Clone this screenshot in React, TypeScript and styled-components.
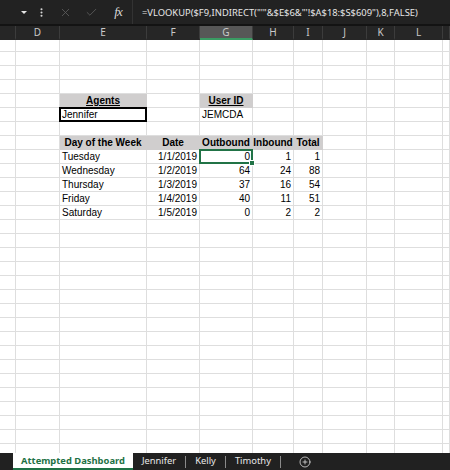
import { FunctionComponent, Fragment } from 'react'
import styled, { createGlobalStyle } from 'styled-components'
import { X, Check, EllipsisVertical, CirclePlus } from 'lucide-react'

const GlobalStyle = createGlobalStyle`
  html, body {
    margin: 0;
    padding: 0;
    background: #fff;
  }
  #root {
    width: 450px;
    height: 470px;
    overflow: hidden;
  }
`

const COLS = [16, 44, 87, 53, 53, 41, 29, 44, 28, 48, 7]
const LABELS = ['', 'D', 'E', 'F', 'G', 'H', 'I', 'J', 'K', 'L', '']
const ACTIVE_COL = 4
const ROW_COUNT = 30
const template = COLS.map((w) => `${w}px`).join(' ')

type Align = 'left' | 'center' | 'right'

interface CellDef {
  text: string
  bold?: boolean
  underline?: boolean
  align?: Align
  fill?: boolean
  frame?: 'thick' | 'active'
}

const head = (text: string): CellDef => ({ text, bold: true, align: 'center', fill: true })
const num = (text: string): CellDef => ({ text, align: 'right' })

const data: [string, string, string, string, string][] = [
  ['Tuesday', '1/1/2019', '0', '1', '1'],
  ['Wednesday', '1/2/2019', '64', '24', '88'],
  ['Thursday', '1/3/2019', '37', '16', '54'],
  ['Friday', '1/4/2019', '40', '11', '51'],
  ['Saturday', '1/5/2019', '0', '2', '2'],
]

const cells: Record<string, CellDef> = {
  '4-2': { ...head('Agents'), underline: true },
  '4-4': { ...head('User ID'), underline: true },
  '5-2': { text: 'Jennifer', frame: 'thick' },
  '5-4': { text: 'JEMCDA' },
  '7-2': head('Day of the Week'),
  '7-3': head('Date'),
  '7-4': head('Outbound'),
  '7-5': head('Inbound'),
  '7-6': head('Total'),
}

data.forEach((row, i) => {
  const r = 8 + i
  cells[`${r}-2`] = { text: row[0] }
  cells[`${r}-3`] = num(row[1])
  cells[`${r}-4`] = { ...num(row[2]), frame: i === 0 ? 'active' : undefined }
  cells[`${r}-5`] = num(row[3])
  cells[`${r}-6`] = num(row[4])
})

const Window = styled.div`
  display: flex;
  flex-direction: column;
  width: 450px;
  height: 470px;
  background: #fff;
`

const FormulaBar = styled.div`
  display: flex;
  align-items: center;
  height: 24px;
  flex-shrink: 0;
  background: #222222;
  border-bottom: 2px solid #131313;
  color: #e6e6e6;
  font-family: 'Noto Sans', 'Open Sans', sans-serif;
`

const NameBox = styled.div`
  display: flex;
  align-items: center;
  justify-content: flex-end;
  width: 30px;
  height: 100%;
  padding-right: 3px;
  box-sizing: border-box;
`

const Caret = styled.span`
  width: 0;
  height: 0;
  border-left: 3px solid transparent;
  border-right: 3px solid transparent;
  border-top: 3px solid #e6e6e6;
`

const Tool = styled.div<{ $dim?: boolean; $w: number }>`
  display: flex;
  align-items: center;
  justify-content: center;
  width: ${({ $w }) => $w}px;
  height: 100%;
  color: ${({ $dim }) => ($dim ? '#5f5f5f' : '#d8d8d8')};
`

const Fx = styled.span`
  font-family: 'Liberation Serif', serif;
  font-style: italic;
  font-size: 13px;
  letter-spacing: -1px;
  color: #d8d8d8;
`

const FormulaText = styled.div`
  flex: 1;
  display: flex;
  align-items: center;
  height: 100%;
  padding-left: 9px;
  border-left: 1px solid #333;
  font-size: 9.4px;
  white-space: nowrap;
  overflow: hidden;
`

const HeaderRow = styled.div`
  display: grid;
  grid-template-columns: ${template};
  height: 14px;
  flex-shrink: 0;
  background: #262626;
  font-family: 'Noto Sans', 'Open Sans', sans-serif;
  font-size: 10px;
  color: #c9c9c9;
`

const ColHead = styled.div<{ $active?: boolean }>`
  display: flex;
  align-items: center;
  justify-content: center;
  box-sizing: border-box;
  border-right: 1px solid #3c3c3c;
  background: ${({ $active }) => ($active ? '#575757' : 'transparent')};
  border-bottom: 2px solid ${({ $active }) => ($active ? '#3a9b63' : 'transparent')};
  line-height: 1;
`

const Sheet = styled.div`
  flex: 1;
  display: grid;
  grid-template-columns: ${template};
  grid-template-rows: 12px;
  grid-auto-rows: 14px;
  overflow: hidden;
  font-family: 'Liberation Sans', Arial, sans-serif;
  font-size: 10px;
  color: #000;
`

const Cell = styled.div<{
  $bold?: boolean
  $underline?: boolean
  $align?: Align
  $fill?: boolean
  $frame?: 'thick' | 'active'
}>`
  position: relative;
  display: flex;
  align-items: center;
  justify-content: ${({ $align }) =>
    $align === 'right' ? 'flex-end' : $align === 'center' ? 'center' : 'flex-start'};
  box-sizing: border-box;
  padding: 0 2px;
  white-space: nowrap;
  overflow: visible;
  background: ${({ $fill }) => ($fill ? '#d0cece' : '#fff')};
  border-right: 1px solid ${({ $fill }) => ($fill ? '#d0cece' : '#dedede')};
  border-bottom: 1px solid ${({ $fill }) => ($fill ? '#d0cece' : '#dedede')};
  font-weight: ${({ $bold }) => ($bold ? 700 : 400)};
  text-decoration: ${({ $underline }) => ($underline ? 'underline' : 'none')};
  text-underline-offset: 1px;

  ${({ $frame }) =>
    $frame &&
    `
    &::after {
      content: "";
      position: absolute;
      top: -1px;
      left: -1px;
      right: -1px;
      bottom: -1px;
      border: 2px solid ${$frame === 'thick' ? '#000' : '#217346'};
      pointer-events: none;
    }
  `}

  ${({ $frame }) =>
    $frame === 'active' &&
    `
    &::before {
      content: "";
      position: absolute;
      right: -3px;
      bottom: -3px;
      width: 4px;
      height: 4px;
      background: #217346;
      border: 1px solid #fff;
      z-index: 2;
    }
  `}
`

const TabBar = styled.div`
  display: flex;
  align-items: stretch;
  height: 17px;
  flex-shrink: 0;
  background: #212121;
  font-family: 'Noto Sans', 'Open Sans', sans-serif;
  font-size: 9.4px;
  color: #e8e8e8;
`

const TabSpacer = styled.div`
  width: 13px;
`

const Tab = styled.div<{ $active?: boolean }>`
  display: flex;
  align-items: center;
  padding: 0 ${({ $active }) => ($active ? 8 : 9)}px;
  box-sizing: border-box;
  white-space: nowrap;
  background: ${({ $active }) => ($active ? '#fff' : 'transparent')};
  color: ${({ $active }) => ($active ? '#1e7145' : '#e8e8e8')};
  font-weight: ${({ $active }) => ($active ? 700 : 400)};
  border-bottom: 2px solid ${({ $active }) => ($active ? '#1e7145' : 'transparent')};
`

const TabDivider = styled.div`
  width: 1px;
  margin: 3px 0 2px;
  background: #8a8a8a;
`

const AddSheet = styled.div`
  display: flex;
  align-items: center;
  padding-left: 18px;
  color: #e8e8e8;
`

const tabs = ['Jennifer', 'Kelly', 'Timothy']

const App: FunctionComponent = () => {
  const rows = Array.from({ length: ROW_COUNT }, (_, r) => r)
  return (
    <>
      <GlobalStyle />
      <Window>
        <FormulaBar>
          <NameBox>
            <Caret />
          </NameBox>
          <Tool $w={22}>
            <EllipsisVertical size={11} strokeWidth={2.5} />
          </Tool>
          <Tool $w={26} $dim>
            <X size={13} strokeWidth={1.5} />
          </Tool>
          <Tool $w={26} $dim>
            <Check size={13} strokeWidth={1.5} />
          </Tool>
          <Tool $w={28}>
            <Fx>fx</Fx>
          </Tool>
          <FormulaText>=VLOOKUP($F9,INDIRECT("'"&amp;$E$6&amp;"'!$A$18:$S$609"),8,FALSE)</FormulaText>
        </FormulaBar>
        <HeaderRow>
          {LABELS.map((label, c) => (
            <ColHead key={c} $active={c === ACTIVE_COL}>
              {label}
            </ColHead>
          ))}
        </HeaderRow>
        <Sheet>
          {rows.map((r) =>
            COLS.map((_, c) => {
              const def = cells[`${r}-${c}`]
              return (
                <Cell
                  key={`${r}-${c}`}
                  $bold={def?.bold}
                  $underline={def?.underline}
                  $align={def?.align}
                  $fill={def?.fill}
                  $frame={def?.frame}
                >
                  {def?.text}
                </Cell>
              )
            })
          )}
        </Sheet>
        <TabBar>
          <TabSpacer />
          <Tab $active>Attempted Dashboard</Tab>
          {tabs.map((t, i) => (
            <Fragment key={t}>
              {i > 0 && <TabDivider />}
              <Tab>{t}</Tab>
            </Fragment>
          ))}
          <TabDivider />
          <AddSheet>
            <CirclePlus size={12} strokeWidth={1.5} />
          </AddSheet>
        </TabBar>
      </Window>
    </>
  )
}

export default App
